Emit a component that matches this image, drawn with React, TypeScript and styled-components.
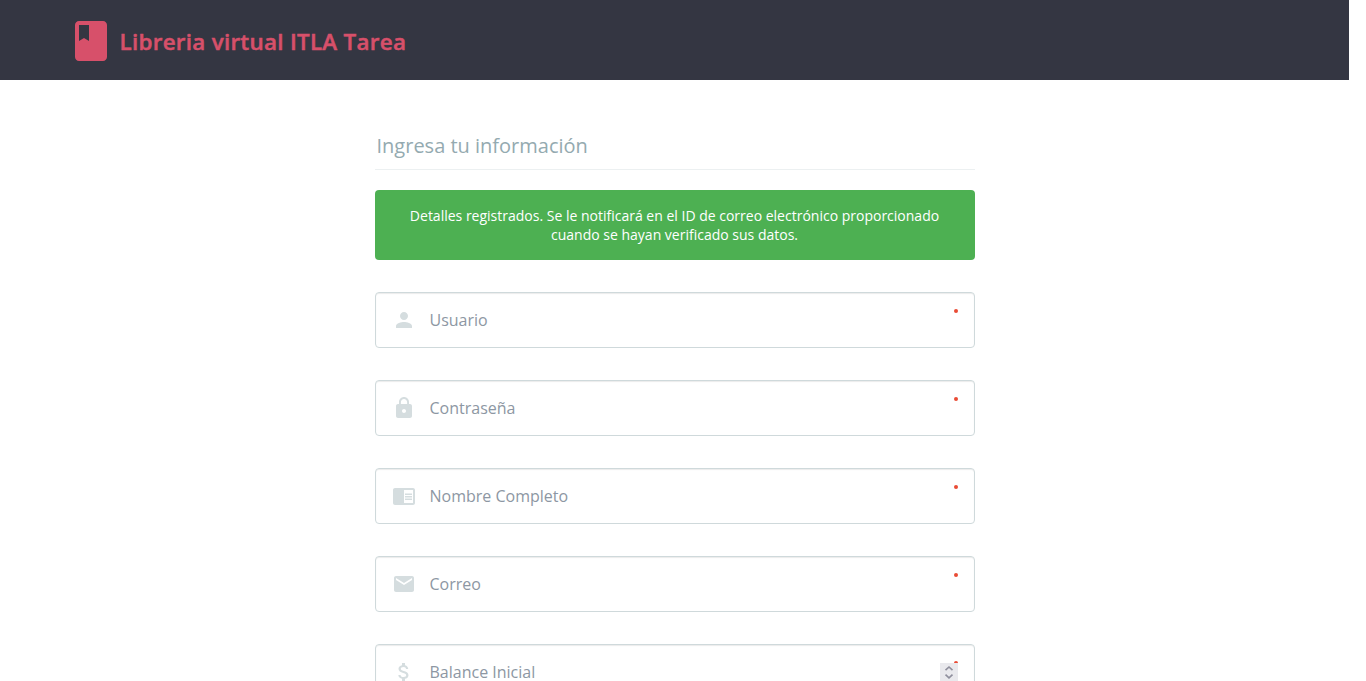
import React from "react";
import styled, { createGlobalStyle } from "styled-components";
import {
  MdAttachMoney,
  MdBook,
  MdChromeReaderMode,
  MdEmail,
  MdLock,
  MdPerson,
} from "react-icons/md";
import type { IconType } from "react-icons";

const GlobalStyle = createGlobalStyle`
  *, *::before, *::after { box-sizing: border-box; }
  html { height: 100%; overflow: hidden; background: #fff; }
  body {
    margin: 0;
    height: 100%;
    overflow: hidden;
    font-family: "Open Sans", sans-serif;
    font-size: 16px;
  }
`;

const Page = styled.div`
  width: 1349px;
  height: 681px;
  overflow: hidden;
  background: #fff;
`;

const Header = styled.header`
  display: flex;
  align-items: center;
  height: 80px;
  padding: 2px 0 0 67px;
  background: #343642;
  color: #d7506a;
`;

const Logo = styled(MdBook)`
  flex: none;
  width: 48px;
  height: 48px;
`;

const Brand = styled.h1`
  margin: 0 0 0 4.5px;
  padding-top: 2px;
  font-size: 22.4px;
  line-height: 30px;
  font-weight: 600;
  letter-spacing: 0.28px;
  -webkit-text-stroke: 0.5px currentColor;
  white-space: nowrap;
`;

const Form = styled.form`
  width: 600px;
  margin: 50px 0 0 375px;
`;

const Legend = styled.h2`
  margin: 0 0 20px;
  height: 40px;
  padding: 0 0 0 1.5px;
  border-bottom: 1px solid #ecf0f1;
  color: #94aab0;
  font-size: 20px;
  font-weight: 400;
  line-height: 32px;
`;

const Notice = styled.div`
  height: 70px;
  padding: 16px 31px 16px 30px;
  border-radius: 4px;
  background: #4db052;
  color: #fff;
  font-size: 14px;
  line-height: 19px;
  text-align: center;
`;

const Field = styled.label`
  display: flex;
  align-items: center;
  position: relative;
  height: 56px;
  margin-top: 32px;
  padding: 0 16px;
  border: 1px solid #cfd9db;
  border-radius: 4px;
  background: #fff;
  box-shadow: inset 0 1px 1px rgba(0, 0, 0, 0.08);
  color: #d5dddf;

  > svg {
    flex: none;
  }
`;

const Input = styled.input`
  flex: 1;
  min-width: 0;
  height: 24px;
  margin-left: 13.5px;
  padding: 0;
  border: 0;
  outline: 0;
  background: transparent;
  color: #2b3e51;
  font: 16px "Open Sans", sans-serif;

  &::placeholder {
    color: #8d97a3;
    opacity: 1;
  }
`;

const Required = styled.span`
  position: absolute;
  top: 16px;
  right: 16px;
  width: 4px;
  height: 4px;
  border-radius: 50%;
  background: #e94b35;
`;

const Spinner = styled.span`
  position: relative;
  z-index: 1;
  display: flex;
  width: 18px;
  height: 19px;
  background: #e9e9ed;
`;

const fields: { label: string; icon: IconType; type: string; stepper?: boolean }[] = [
  { label: "Usuario", icon: MdPerson, type: "text" },
  { label: "Contraseña", icon: MdLock, type: "password" },
  { label: "Nombre Completo", icon: MdChromeReaderMode, type: "text" },
  { label: "Correo", icon: MdEmail, type: "email" },
  { label: "Balance Inicial", icon: MdAttachMoney, type: "text", stepper: true },
];

export default function App() {
  return (
    <>
      <GlobalStyle />
      <Page>
        <Header>
          <Logo />
          <Brand>Libreria virtual ITLA Tarea</Brand>
        </Header>
        <Form>
          <Legend>Ingresa tu información</Legend>
          <Notice>
            Detalles registrados. Se le notificará en el ID de correo electrónico proporcionado cuando
            se hayan verificado sus datos.
          </Notice>
          {fields.map(({ label, icon: Icon, type, stepper }) => (
            <Field key={label}>
              <Icon size={24} />
              <Input type={type} placeholder={label} />
              <Required />
              {stepper && (
                <Spinner>
                  <svg width="18" height="19" viewBox="0 0 18 19" fill="none" stroke="#8f8f9d" strokeWidth="1.6">
                    <path d="M5.5 7.2 9 4l3.5 3.2M5.5 11.6 9 14.8l3.5-3.2" />
                  </svg>
                </Spinner>
              )}
            </Field>
          ))}
        </Form>
      </Page>
    </>
  );
}
